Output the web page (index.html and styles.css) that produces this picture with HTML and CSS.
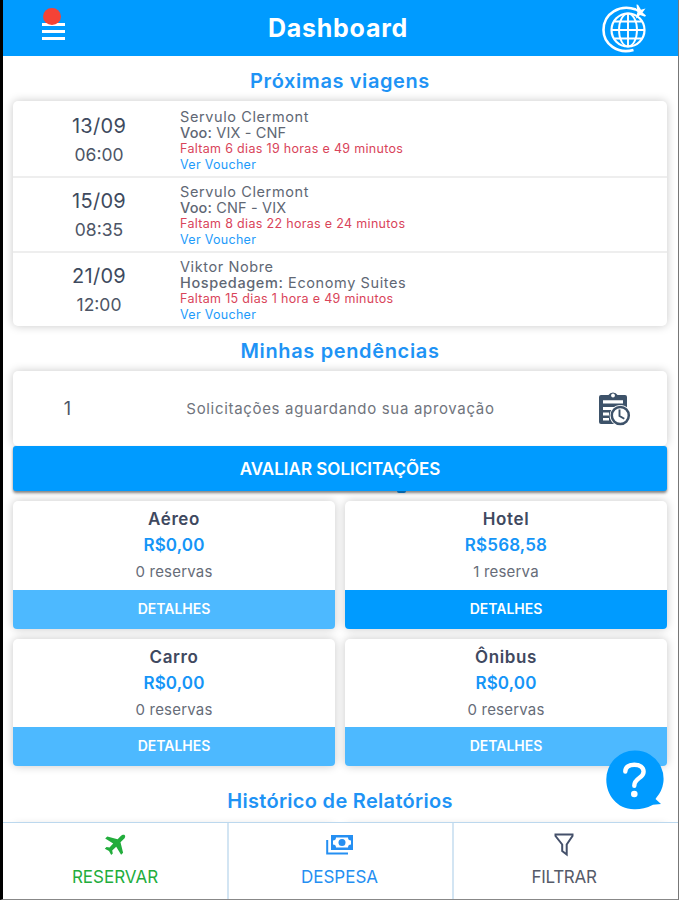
FILE: index.html
```
<!DOCTYPE html>
<html lang="pt-BR">
<head>
  <meta charset="UTF-8">
  <title>Dashboard</title>
  <link rel="stylesheet" href="styles.css">
</head>
<body>
  <div class="app">
    <header class="topbar">
      <button class="menu" aria-label="Menu">
        <span class="bar"></span>
        <span class="bar"></span>
        <span class="bar"></span>
        <span class="dot"></span>
      </button>
      <h1>Dashboard</h1>
      <svg class="globe" viewBox="0 0 48 50" fill="none" stroke="#fff" stroke-width="1.9">
        <circle cx="28" cy="26" r="16.500" stroke-width="2.200"/>
        <ellipse cx="28" cy="26" rx="9" ry="16.500"/>
        <path d="M28 9.500v33M11.500 26h33M14.500 17.500h27M14.500 34.500h27"/>
        <path d="M36 5.500C20 0 3.500 9 3.500 26c0 14 14 24.500 30 20" stroke-width="2.600"/>
        <path d="M33 4.500l4 .5-.5-4.500 1.500.2 3 5 4.500-1.200-3 4 3.500 3-1 1.200-5-1.700-3.500 3.500-.5-1.500 1.500-5z" fill="#fff" stroke="none"/>
      </svg>
    </header>

    <main>
      <!-- Trips -->
      <h2 class="title-trips">Próximas viagens</h2>
      <div class="card trips">
        <div class="trip">
          <div class="when"><span class="date">13/09</span><span class="time">06:00</span></div>
          <div class="info">
            <p class="name">Servulo Clermont</p>
            <p class="kind route"><b>Voo:</b> VIX - CNF</p>
            <p class="left">Faltam 6 dias 19 horas e 49 minutos</p>
            <a class="voucher">Ver Voucher</a>
          </div>
        </div>
        <div class="trip">
          <div class="when"><span class="date">15/09</span><span class="time">08:35</span></div>
          <div class="info">
            <p class="name">Servulo Clermont</p>
            <p class="kind route"><b>Voo:</b> CNF - VIX</p>
            <p class="left">Faltam 8 dias 22 horas e 24 minutos</p>
            <a class="voucher">Ver Voucher</a>
          </div>
        </div>
        <div class="trip">
          <div class="when"><span class="date">21/09</span><span class="time">12:00</span></div>
          <div class="info">
            <p class="name">Viktor Nobre</p>
            <p class="kind"><b>Hospedagem:</b> Economy Suites</p>
            <p class="left">Faltam 15 dias 1 hora e 49 minutos</p>
            <a class="voucher">Ver Voucher</a>
          </div>
        </div>
      </div>

      <!-- Pending approvals -->
      <h2 class="title-pending">Minhas pendências</h2>
      <div class="card pending">
        <span class="count">1</span>
        <span class="message">Solicitações aguardando sua aprovação</span>
        <svg class="clipboard" viewBox="0 0 34 36">
          <path d="M3 4h7.500a5 4.500 0 0 1 9 0H27a2 2 0 0 1 2 2v24a3 3 0 0 1-3 3H3a2 2 0 0 1-2-2V6a2 2 0 0 1 2-2z" fill="#3d5269"/>
          <circle cx="15" cy="4.500" r="1.900" fill="#fff"/>
          <path d="M5 9.300h20v3.200H5zM5 16h9.500v3H5zM5 21.500h6v3H5zM5 27h6v2.500H5z" fill="#fff"/>
          <path d="M14 16h12v3H14z" fill="#fff"/>
          <path d="M25 31h5v4h-5z" fill="#fff"/>
          <circle cx="22.300" cy="24.500" r="10.600" fill="#fff"/>
          <circle cx="22.300" cy="24.500" r="8.500" fill="#fff" stroke="#3d5269" stroke-width="2.500"/>
          <path d="M21.500 18.500v6.500l4.800 2.800" fill="none" stroke="#3d5269" stroke-width="1.900"/>
        </svg>
      </div>
      <button class="evaluate">AVALIAR SOLICITAÇÕES</button>

      <!-- Totals by type -->
      <div class="totals">
        <div class="card total">
          <h3>Aéreo</h3>
          <p class="value">R$0,00</p>
          <p class="bookings">0 reservas</p>
          <button class="details" disabled>DETALHES</button>
        </div>
        <div class="card total">
          <h3>Hotel</h3>
          <p class="value">R$568,58</p>
          <p class="bookings">1 reserva</p>
          <button class="details">DETALHES</button>
        </div>
        <div class="card total">
          <h3>Carro</h3>
          <p class="value">R$0,00</p>
          <p class="bookings">0 reservas</p>
          <button class="details" disabled>DETALHES</button>
        </div>
        <div class="card total">
          <h3>Ônibus</h3>
          <p class="value">R$0,00</p>
          <p class="bookings">0 reservas</p>
          <button class="details" disabled>DETALHES</button>
        </div>
      </div>

      <!-- Reports -->
      <h2 class="title-reports">Histórico de Relatórios</h2>
      <div class="reports">
        <div class="card"></div>
        <div class="card"></div>
      </div>
    </main>

    <nav>
      <a class="tab book">
        <svg width="22" height="22" viewBox="0 0 22 22" fill="currentColor">
          <path d="M20.800 1.200c-1-.9-2.800-.3-4 .9l-3.200 3.200L3.300 2.600 1.200 4.600l8 5-3.700 4-3-.6L.8 14.700l4.200 2.200 2.200 4.200 1.600-1.600-.6-3 4-3.800 4.900 8.100 2-2.100-2.600-10.400 3.300-3.200c1.200-1.200 1.900-3 1-3.900z"/>
        </svg>
        <span>RESERVAR</span>
      </a>
      <a class="tab expense">
        <svg width="28" height="22" viewBox="0 0 28 22">
          <path d="M1.200 6v13.500H22" fill="none" stroke="currentColor" stroke-width="2"/>
          <rect x="5" y="1" width="22" height="15" fill="currentColor"/>
          <path d="M10 3.500h12a3 3 0 0 0 3 3v4a3 3 0 0 0-3 3H10a3 3 0 0 0-3-3v-4a3 3 0 0 0 3-3z" fill="#fff"/>
          <circle cx="16" cy="8.500" r="3.500" fill="currentColor"/>
        </svg>
        <span>DESPESA</span>
      </a>
      <a class="tab filter">
        <svg width="22" height="24" viewBox="0 0 22 24" fill="none" stroke="#44506a" stroke-width="2">
          <path d="M2.500 1.500h17v1.500L13.700 11.500V21.500l-4.500-3.500v-6.500L2.500 3z"/>
        </svg>
        <span>FILTRAR</span>
      </a>
    </nav>

    <svg class="help" viewBox="0 0 58 60">
      <path d="M28.500.5A28.300 28.300 0 0 1 50.500 47.500L49.500 49l5.500 5-8 .8C40 58.500 34 59.500 28 59.300 11 59 .3 45 .3 29.500A28.300 28.800 0 0 1 28.500.5z" fill="#009bff"/>
      <path d="M19.300 21.500c0-4.500 4-6.800 9-6.800 5.500 0 9.300 2.300 9.300 7 0 6.800-9.300 6-9.300 14" fill="none" stroke="#fff" stroke-width="4.400" stroke-linecap="round"/>
      <circle cx="28.300" cy="44" r="3.300" fill="#fff"/>
    </svg>
  </div>
</body>
</html>
```
FILE: styles.css
```
* {
  box-sizing: border-box;
}
body {
  margin: 0;
  font-family: Inter, "Open Sans", sans-serif;
  background: #fff;
  color: #4d5566;
}
h1, h2, h3, p {
  margin: 0;
}
button {
  border: none;
  padding: 0;
  font-family: inherit;
  color: #fff;
  background: #009bff;
}
.app {
  position: relative;
  display: flex;
  flex-direction: column;
  height: 900px;
  border-left: 3px solid #000;
  border-right: 1px solid #777;
  border-bottom: 1px solid #888;
  overflow: hidden;
}

/* Header */
.topbar {
  display: grid;
  grid-template-columns: 100px 1fr 100px;
  align-items: center;
  height: 56px;
  flex: none;
  background: #009bff;
}
.topbar h1 {
  font-size: 25px;
  font-weight: 700;
  letter-spacing: 0.75px;
  margin-right: 5px;
  text-align: center;
  color: #fff;
}
.menu {
  position: relative;
  display: flex;
  flex-direction: column;
  gap: 4px;
  width: 23px;
  margin: 6px 0 0 39px;
}
.bar {
  height: 3px;
  background: #fff;
}
.dot {
  position: absolute;
  left: 1px;
  top: -15px;
  width: 18px;
  height: 17px;
  border-radius: 50%;
  background: #f44336;
}
.globe {
  width: 48px;
  height: 50px;
  margin: 2px 0 0 22px;
}

/* Content */
main {
  flex: 1;
  min-height: 0;
  padding: 0 11px 0 10px;
  overflow: hidden;
}
h2 {
  height: 45px;
  line-height: 51px;
  font-size: 20px;
  font-weight: 600;
  text-align: center;
  color: #1e93f5;
}
.title-trips {
  letter-spacing: 0.6px;
}
.title-pending {
  line-height: 50px;
  letter-spacing: 0.65px;
}
.title-reports {
  height: 60px;
  line-height: 71px;
  letter-spacing: 0.3px;
}
.card {
  background: #fff;
  border-radius: 5px;
  box-shadow: 0 0 10px rgba(0, 0, 0, 0.22);
}
.trip {
  display: flex;
  height: 75px;
}
.trip + .trip {
  border-top: 2px solid #eee;
}
.when {
  display: flex;
  flex-direction: column;
  width: 172px;
  flex: none;
  padding-top: 11px;
  text-align: center;
}
.date {
  line-height: 29px;
  font-size: 20px;
  letter-spacing: 0.3px;
  color: #3e4a5e;
}
.time {
  line-height: 27px;
  font-size: 17.5px;
}
.info {
  padding-top: 8px;
  margin-left: -5px;
}
.trip + .trip .info, .trip + .trip .when {
  margin-top: -2px;
}
.name, .kind {
  line-height: 16px;
  font-size: 14.5px;
  letter-spacing: 0.6px;
  color: #606774;
}
.kind b {
  font-weight: 500;
}
.route {
  letter-spacing: 0.15px;
}
.left {
  line-height: 16px;
  font-size: 12.5px;
  letter-spacing: 0.32px;
  color: #d9445a;
}
.voucher {
  display: block;
  line-height: 15px;
  font-size: 12.5px;
  letter-spacing: 0.3px;
  color: #1e9bfa;
}
.pending {
  display: flex;
  align-items: center;
  height: 75px;
}
.count {
  width: 109px;
  text-align: center;
  font-size: 18px;
}
.message {
  width: 437px;
  text-align: center;
  font-size: 15px;
  letter-spacing: 0.68px;
  color: #70747d;
}
.clipboard {
  width: 34px;
  height: 36px;
  margin-left: 39px;
}
.evaluate {
  position: relative;
  display: block;
  width: 100%;
  height: 45px;
  border-radius: 3px;
  box-shadow: 0 2px 3px rgba(0, 0, 0, 0.5);
  font-size: 17px;
  font-weight: 600;
}
/* dark lip on the lower edge of the button */
.evaluate::after {
  content: "";
  position: absolute;
  left: 384px;
  bottom: -2px;
  width: 9px;
  height: 2px;
  border-radius: 0 0 5px 5px;
  background: #0765a8;
}
.totals {
  display: grid;
  grid-template-columns: 1fr 1fr;
  gap: 10px;
  margin-top: 10px;
}
.total {
  display: flex;
  flex-direction: column;
  height: 127.5px;
  padding-top: 4px;
  text-align: center;
}
h3 {
  line-height: 28px;
  font-size: 17px;
  font-weight: 600;
  letter-spacing: 0.6px;
  color: #3f4960;
}
.value {
  line-height: 25px;
  font-size: 17px;
  font-weight: 600;
  letter-spacing: 0.15px;
  color: #1595f7;
}
.bookings {
  line-height: 28px;
  font-size: 15px;
  letter-spacing: 0.2px;
  color: #666c78;
}
.details {
  height: 39px;
  margin-top: auto;
  padding-bottom: 2px;
  border-radius: 0 0 4px 4px;
  font-size: 14px;
  font-weight: 600;
}
.details:disabled {
  color: #fff;
  background: #4db9ff;
}
.reports {
  display: grid;
  grid-template-columns: 1fr 1fr;
  gap: 10px;
}
.reports .card {
  height: 120px;
}

/* Bottom navigation */
nav {
  display: grid;
  grid-template-columns: 224px 225px 1fr;
  height: 77px;
  flex: none;
  border-top: 1px solid #bcd8ee;
  background: #fff;
}
.tab {
  display: flex;
  flex-direction: column;
  align-items: center;
  padding-top: 10px;
  font-size: 17px;
}
.tab + .tab {
  border-left: 2px solid #d3e5f3;
}
.tab svg {
  height: 24px;
}
.tab span {
  margin-top: 10px;
}
.book {
  color: #22ad3c;
}
.expense {
  padding-right: 2px;
  color: #258ff2;
}
.filter {
  padding-right: 4px;
  color: #555b69;
}
.filter span {
  letter-spacing: -0.3px;
}
.help {
  position: absolute;
  left: 603px;
  top: 750px;
  width: 58px;
  height: 60px;
}
```
